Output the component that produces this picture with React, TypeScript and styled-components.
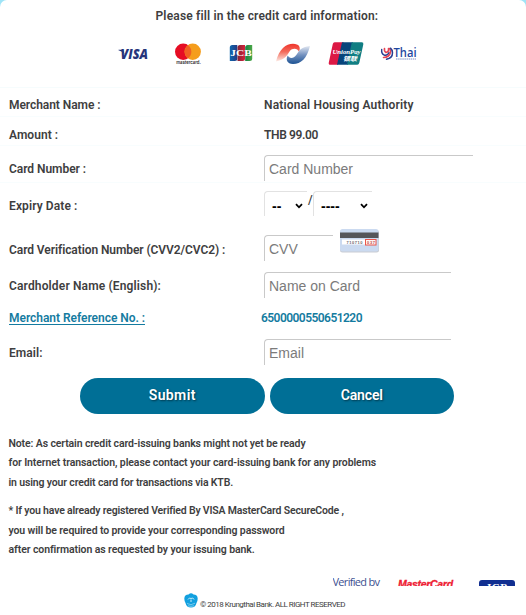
import React from "react";
import styled, { createGlobalStyle } from "styled-components";

const Global = createGlobalStyle`
  * { box-sizing: border-box; }
  html, body { margin: 0; height: 100%; overflow: hidden; }
  body { background: #9fe4f7; font-family: Roboto, sans-serif; color: #3e3e40; }
`;

const Page = styled.main`
  display: flex;
  flex-direction: column;
  width: 526px;
  height: 615px;
  overflow: hidden;
  background: #fff;
  border-radius: 7px 7px 0 0;
`;

const Header = styled.header`
  display: flex;
  flex-direction: column;
  height: 88px;
  flex: none;
  padding-top: 8px;
  border-bottom: 1px solid #f6fcfd;
`;

const Title = styled.h1`
  margin: 0 0 0 155.5px;
  font-size: 12px;
  line-height: 16px;
  font-weight: 600;
  letter-spacing: 0.172px;
  white-space: nowrap;
`;

const BrandRow = styled.div`
  display: flex;
  margin: 16px 0 0 116px;
`;

const BrandArt = styled.svg`
  display: block;
  flex: none;
`;

const Row = styled.div<{ $h: number; $line?: boolean }>`
  display: grid;
  grid-template-columns: 255px 1fr;
  flex: none;
  height: ${(p) => p.$h}px;
  padding-left: 9px;
  border-bottom: 1px solid ${(p) => (p.$line ? "#f8fdfe" : "#fff")};
`;

const Label = styled.span<{ $top: number; $track: number; $link?: boolean }>`
  justify-self: start;
  align-self: start;
  margin-top: ${(p) => p.$top}px;
  font-size: 12px;
  line-height: 16px;
  font-weight: 600;
  letter-spacing: ${(p) => p.$track}px;
  white-space: nowrap;
  color: ${(p) => (p.$link ? "#147ba0" : "inherit")};
  text-decoration: ${(p) => (p.$link ? "underline" : "none")};
  text-underline-offset: 1.5px;
`;

const RefValue = styled(Label)`
  margin-left: -3px;
  text-decoration: none;
`;

const Field = styled.div<{ $top: number }>`
  display: flex;
  align-items: flex-start;
  padding-top: ${(p) => p.$top}px;
`;

const Input = styled.input<{ $w: number }>`
  width: ${(p) => p.$w}px;
  height: 26px;
  padding: 0 0 0 4px;
  border: 0 solid #c9c9c9;
  border-top-width: 1px;
  border-left-width: 1.5px;
  border-radius: 4px 0 0 0;
  outline: none;
  background: transparent;
  font: 14px "Liberation Sans", Arial, sans-serif;
  &::placeholder { color: #7b7b7b; opacity: 1; }
`;

const Select = styled.div<{ $w: number }>`
  display: flex;
  justify-content: space-between;
  align-items: center;
  width: ${(p) => p.$w}px;
  height: 25px;
  padding: 3px 4px 0 7px;
  border: 0 solid #e2e2e2;
  border-top-width: 1px;
  border-left-width: 1px;
  border-radius: 4px 0 0 0;
  color: #000;
  font: bold 14px "Liberation Sans", Arial, sans-serif;
`;

const Slash = styled.span`
  width: 6px;
  margin-top: 1px;
  padding-left: 1px;
  font-size: 12px;
  line-height: 16px;
  font-weight: 500;
`;

const CardBack = styled.svg`
  margin: -7px 0 0 6px;
  flex: none;
`;

const Actions = styled.div`
  display: flex;
  flex: none;
  gap: 5px;
  margin: 7px 0 0 80px;
`;

const Button = styled.button<{ $track: number }>`
  width: 184.5px;
  height: 36px;
  padding: 0 0 2px;
  border: 0;
  border-radius: 18px;
  background: #006f96;
  color: #fff;
  font: 600 14px Roboto, sans-serif;
  letter-spacing: ${(p) => p.$track}px;
  text-shadow: 1px 1px 2px rgba(0, 0, 0, 0.5);
`;

const Notes = styled.section`
  flex: none;
  margin: 19.5px 0 0 8.5px;
`;

const Note = styled.p`
  margin: 0 0 9px;
`;

const NoteLine = styled.span<{ $track: number }>`
  display: block;
  height: 19.5px;
  font-size: 10.5px;
  line-height: 19.5px;
  font-weight: 600;
  letter-spacing: ${(p) => p.$track}px;
  white-space: nowrap;
`;

const Badges = styled.div`
  display: flex;
  flex: none;
  height: 12px;
  margin: 5px 0 0 332.5px;
  overflow: hidden;
`;

const Verified = styled.span`
  width: 65.5px;
  padding-top: 1px;
  font: 500 11px/13px "Open Sans", sans-serif;
  letter-spacing: -0.7px;
  color: #3d4f90;
  white-space: nowrap;
`;

const MasterText = styled.span`
  width: 81px;
  padding-top: 3px;
  font: italic bold 10.5px/14px "Liberation Sans", sans-serif;
  letter-spacing: -0.3px;
  color: #ee2033;
  -webkit-text-stroke: 0.3px #ee2033;
`;

const JcbPlate = styled.span`
  width: 36px;
  height: 14px;
  margin-top: 6px;
  border-radius: 3px 3px 0 0;
  background: #112f91;
  color: #fff;
  font: bold 11px/14px "Liberation Serif", serif;
  letter-spacing: 0.5px;
  text-align: center;
`;

const Footer = styled.footer`
  display: flex;
  align-items: flex-start;
  flex: none;
  margin: 7px 0 0 184px;
  font-size: 8px;
  line-height: 12px;
  letter-spacing: -0.5px;
  white-space: nowrap;
`;

const Copyright = styled.span`
  margin: 6px 0 0 2px;
`;

const Chevron = () => (
  <svg width="8" height="6" viewBox="0 0 8 6">
    <path d="M1 1.2 4 4.3 7 1.2" fill="none" stroke="#000" strokeWidth="1.8" />
  </svg>
);

const Brands = () => (
  <BrandRow>
    <BrandArt width="310" height="30" viewBox="116 40 310 30">
      <defs>
        <linearGradient id="red" x1="0" x2="0" y1="0" y2="1">
          <stop offset="0" stopColor="#f0342c" />
          <stop offset=".45" stopColor="#f2695a" />
          <stop offset="1" stopColor="#fdece6" />
        </linearGradient>
        <linearGradient id="blue" x1="0" x2="0" y1="0" y2="1">
          <stop offset="0" stopColor="#e3e8f2" />
          <stop offset=".5" stopColor="#7391bf" />
          <stop offset="1" stopColor="#1c5293" />
        </linearGradient>
        <linearGradient id="jb" x1="0" x2="1"><stop stopColor="#0f67ad" /><stop offset="1" stopColor="#233b83" /></linearGradient>
        <linearGradient id="jr" x1="0" x2="1"><stop stopColor="#842536" /><stop offset="1" stopColor="#d7213b" /></linearGradient>
        <linearGradient id="jg" x1="0" x2="1"><stop stopColor="#168044" /><stop offset="1" stopColor="#4ba847" /></linearGradient>
      </defs>

      <text x="120.500" y="59.200" fontFamily="Open Sans" fontWeight="800" fontStyle="italic" fontSize="13.200" textLength="27.500" lengthAdjust="spacingAndGlyphs" fill="#26357b">VISA</text>
      <path d="M118.500 49.700h4.500l1.500 4.500q-2-3.200-6-4z" fill="#26357b" />

      <circle cx="183.200" cy="51.800" r="8.200" fill="#e60d24" />
      <circle cx="192.700" cy="51.800" r="8.200" fill="#f59d1c" />
      <path d="M188 45.200a8.200 8.200 0 0 1 0 13.200a8.200 8.200 0 0 1 0-13.200z" fill="#f16022" />
      <text x="176.300" y="64" fontFamily="Inter" fontWeight="600" fontSize="4.500" textLength="24.500" lengthAdjust="spacingAndGlyphs" fill="#2b2529">mastercard.</text>

      <path d="M232.300 45h5v13.500q0 2.500-2.500 2.500h-5V47.500q0-2.500 2.500-2.500z" fill="url(#jb)" />
      <path d="M240 45h5v13.500q0 2.500-2.500 2.500h-5V47.500q0-2.500 2.500-2.500z" fill="url(#jr)" />
      <path d="M247.700 45h4.500v13.500q0 2.500-2.500 2.500h-4.500V47.500q0-2.500 2.500-2.500z" fill="url(#jg)" />
      <text x="230.300" y="55.600" fontFamily="Liberation Serif" fontWeight="700" fontSize="7.500" textLength="21.500" lengthAdjust="spacingAndGlyphs" fill="#fff">JCB</text>

      <path d="M276 61.500C279 49 286 43.700 293 43.700c6 0 8 3.600 6 8-1.500-3.500-6.500-4-9.300-.5-2.800 3.800-3.700 8-13.700 10.300z" fill="url(#red)" />
      <path d="M310 46C307 58.500 301 64 293 64c-6 0-7.500-4.500-5.300-8.500 1.800 3.500 5.800 3.300 8.600-.5 3-4.300 4.200-8 13.700-9z" fill="url(#blue)" />

      <path d="M334.700 42.200h9L338 64.800h-7.500q-2.200 0-1.700-2.300l4-18.500q.4-1.800 1.900-1.800z" fill="#dc1945" />
      <path d="M342 42.200h11L348 64.800h-11z" fill="#07447b" />
      <path d="M351.800 42.200h10q2 0 1.500 2.200l-4 18.400q-.5 2-2 2H347z" fill="#107e83" />
      <text x="332.500" y="53.500" fontFamily="Liberation Serif" fontWeight="700" fontStyle="italic" fontSize="7" textLength="28" lengthAdjust="spacingAndGlyphs" fill="#fff">UnionPay</text>
      <text x="343" y="60.500" fontFamily="Noto Sans CJK SC" fontWeight="700" fontStyle="italic" fontSize="6.200" textLength="14" lengthAdjust="spacingAndGlyphs" fill="#fff">银联</text>

      <g fill="none" strokeLinecap="round">
        <path d="M381.700 49.500q-.5 4 2.300 5.500 3.500 1 5-2.500" stroke="#273d91" strokeWidth="1.400" />
        <path d="M384.500 48.500q-.5 3 1.500 4 3-.5 2.500-4" stroke="#e54454" strokeWidth="1.600" />
        <path d="M383.500 57.500q6-.3 7-5.500.2-2-1-3.500" stroke="#e54454" strokeWidth="1.600" />
        <path d="M386.500 59.200q6-1 6-6.500-.2-3-2-4.500" stroke="#273d91" strokeWidth="1.500" />
      </g>
      <text x="393.500" y="57" fontFamily="Open Sans" fontWeight="600" fontSize="12.500" textLength="23" lengthAdjust="spacingAndGlyphs" fill="#1f47a0">Thai</text>
      <path d="M396 59h20" stroke="#8393c8" strokeWidth="1" strokeDasharray="1.500 .6" />
    </BrandArt>
  </BrandRow>
);

export default function App() {
  return (
    <>
      <Global />
      <Page>
        <Header>
          <Title>Please fill in the credit card information:</Title>
          <Brands />
        </Header>

        <Row $h={29} $line>
          <Label $top={9} $track={-0.057}>Merchant Name :</Label>
          <Label $top={9} $track={0.154}>National Housing Authority</Label>
        </Row>
        <Row $h={29} $line>
          <Label $top={10} $track={0.03}>Amount :</Label>
          <Label $top={10} $track={-0.367}>THB 99.00</Label>
        </Row>
        <Row $h={37} $line>
          <Label $top={15} $track={-0.048}>Card Number :</Label>
          <Field $top={9}><Input $w={209} placeholder="Card Number" /></Field>
        </Row>
        <Row $h={36}>
          <Label $top={15} $track={0.11}>Expiry Date :</Label>
          <Field $top={8}>
            <Select $w={43}>--<Chevron /></Select>
            <Slash>/</Slash>
            <Select $w={59}>----<Chevron /></Select>
          </Field>
        </Row>
        <Row $h={45}>
          <Label $top={23} $track={-0.08}>Card Verification Number (CVV2/CVC2) :</Label>
          <Field $top={16}>
            <Input $w={69} placeholder="CVV" />
            <CardBack width="41" height="26" viewBox="0 0 41 26">
              <rect x="1" y="2" width="39" height="22.500" rx="2.500" fill="#c9ccd3" />
              <rect x="1" y="1" width="38.500" height="22.500" rx="2.500" fill="#cbdaf0" />
              <path d="M1 4.500h38.500v5.500H1z" fill="#55565a" />
              <path d="M3 11.500h23v5H3z" fill="#fff" />
              <text x="7.500" y="15.500" fontFamily="Liberation Sans" fontWeight="700" fontSize="4" textLength="16" fill="#6b656a">710710</text>
              <rect x="26.500" y="11.500" width="10.500" height="5.500" fill="#fff5f3" stroke="#ec5449" />
              <text x="28" y="15.800" fontFamily="Liberation Sans" fontWeight="700" fontSize="4" textLength="8" fill="#c14943">037</text>
            </CardBack>
          </Field>
        </Row>
        <Row $h={39}>
          <Label $top={14} $track={0.145}>Cardholder Name (English):</Label>
          <Field $top={8}><Input $w={187} placeholder="Name on Card" /></Field>
        </Row>
        <Row $h={28}>
          <Label $top={7} $track={-0.04} $link>Merchant Reference No. :</Label>
          <RefValue $top={7} $track={-0.543} $link>6500000550651220</RefValue>
        </Row>
        <Row $h={40}>
          <Label $top={14} $track={0.06}>Email:</Label>
          <Field $top={8}><Input $w={187} placeholder="Email" /></Field>
        </Row>

        <Actions>
          <Button $track={0.378}>Submit</Button>
          <Button $track={-0.161}>Cancel</Button>
        </Actions>

        <Notes>
          <Note>
            <NoteLine $track={-0.126}>Note: As certain credit card-issuing banks might not yet be ready</NoteLine>
            <NoteLine $track={-0.096}>for Internet transaction, please contact your card-issuing bank for any problems</NoteLine>
            <NoteLine $track={-0.15}>in using your credit card for transactions via KTB.</NoteLine>
          </Note>
          <Note>
            <NoteLine $track={-0.181}>* If you have already registered Verified By VISA MasterCard SecureCode ,</NoteLine>
            <NoteLine $track={-0.121}>you will be required to provide your corresponding password</NoteLine>
            <NoteLine $track={-0.089}>after confirmation as requested by your issuing bank.</NoteLine>
          </Note>
        </Notes>

        <Badges>
          <Verified>Verified by</Verified>
          <MasterText>MasterCard</MasterText>
          <JcbPlate>JCB</JcbPlate>
        </Badges>
        <Footer>
          <svg width="14" height="16" viewBox="0 0 14 16">
            <path d="M.3 5.500Q.5 1.500 4.500 1.500 7-1 9.500 1.500q4 0 4.200 4 0 3-1.200 4.500-1 4.500-5.500 4.500T1.500 10Q.3 8 .3 5.500z" fill="#12a0df" />
            <path d="M4 6.500q1.500-2.500 3-1 2-1.500 3 1M7 6.500v2.500" fill="none" stroke="#c6ecf9" strokeWidth="1" />
            <path d="M3 10.500q4 2.500 8-.3M4 12.800q3 1 6 0" fill="none" stroke="#8bd3ef" strokeWidth=".8" />
          </svg>
          <Copyright>© 2018 Krungthai Bank. ALL RIGHT RESERVED</Copyright>
        </Footer>
      </Page>
    </>
  );
}
